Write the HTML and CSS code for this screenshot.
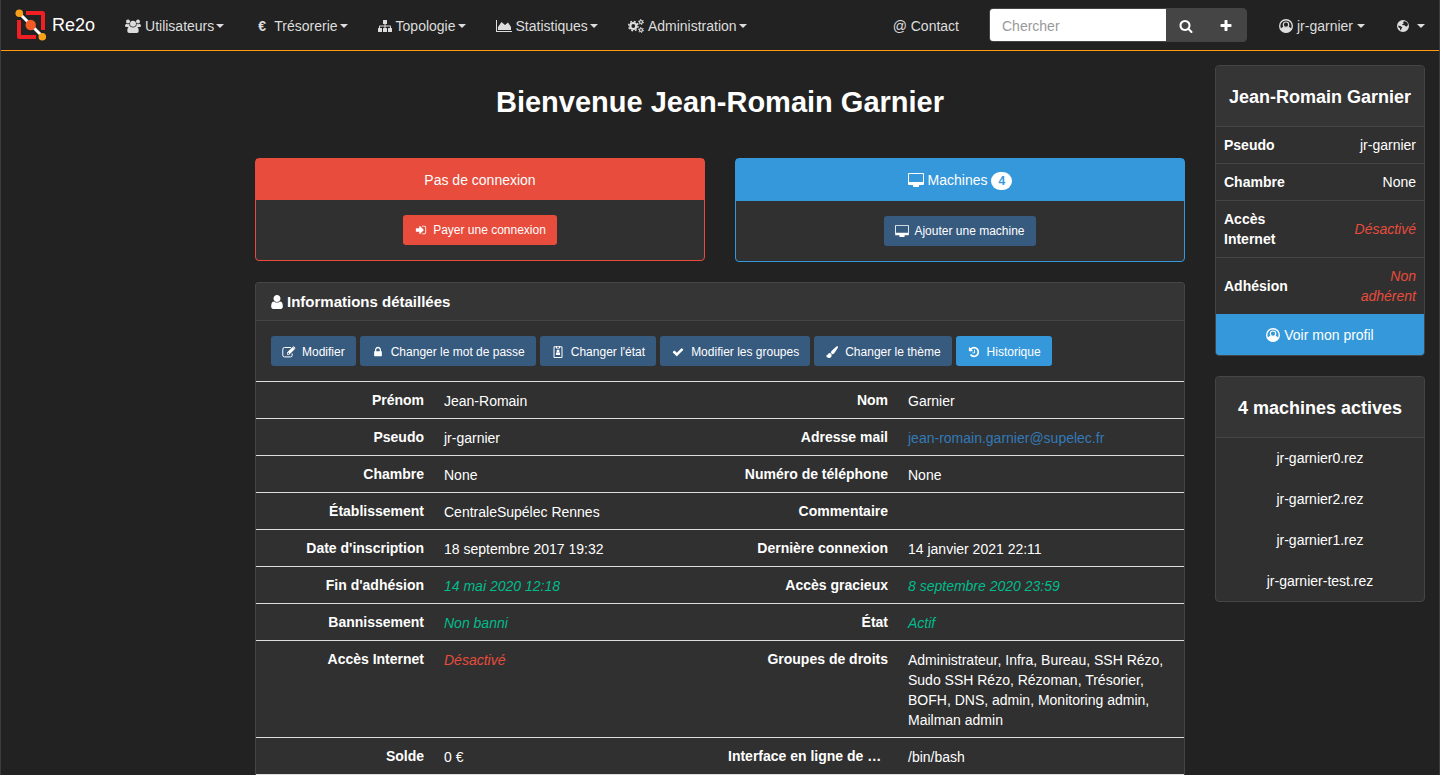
FILE: index.html
```html
<!DOCTYPE html>
<html lang="fr">
<head>
<meta charset="utf-8">
<title>Re2o</title>
<link rel="stylesheet" href="styles.css">
</head>
<body>
<svg class="sprite" aria-hidden="true">
  <symbol id="users" viewBox="0 0 16 14"><circle cx="3" cy="2.6" r="2"/><circle cx="13" cy="2.6" r="2"/><path d="M0 7.6C0 5.5.7 4.7 1.8 4.7c1 .7 1.8.6 2.8.1-.4 1.500.1 2.500.8 3.200H2Q0 8 0 7.600zM16 7.600c0-2.100-.7-2.900-1.800-2.900-1 .7-1.800.6-2.800.1.4 1.500-.1 2.500-.8 3.200H14q2 0 2-.4z"/><circle cx="8" cy="4.800" r="3"/><path d="M2.300 12c0-3 .8-4.600 2.900-4.600 1.800 1.400 3.800 1.400 5.600 0 2.100 0 2.900 1.600 2.900 4.600q0 2-2 2H4.300q-2 0-2-2z"/></symbol>
  <symbol id="sitemap" viewBox="0 0 14 14"><path d="M5.500 1h3q.5 0 .5.5v3q0 .5-.5.5h-1v1.500h4.500q1 0 1 1V9h.5q.5 0 .5.500v3q0 .5-.5.500h-3q-.5 0-.5-.5v-3q0-.5.500-.500H12V7.500H7.500V9h1q.5 0 .5.500v3q0 .5-.5.500h-3q-.5 0-.5-.500v-3q0-.500.500-.500h1V7.500H2V9h1.500q.5 0 .5.500v3q0 .500-.500.500h-3Q0 13 0 12.500v-3Q0 9 .5 9H1V7.500q0-1 1-1h4.500V5h-1Q5 5 5 4.500v-3Q5 1 5.500 1z"/></symbol>
  <symbol id="chart" viewBox="0 0 16 14"><path d="M0 1h1v11h15v1H0zM2 11V8l3.500-5L9 6l3-2.500L15 8v3z"/></symbol>
  <symbol id="cogs" viewBox="0 0 16 14"><g fill="none" stroke="currentColor"><circle cx="5.300" cy="7" r="3" stroke-width="2.200"/><circle cx="5.300" cy="7" r="4.700" stroke-width="1.400" stroke-dasharray="1.900 1.790"/><circle cx="13" cy="3" r="1.500" stroke-width="1.200"/><circle cx="13" cy="3" r="2.500" stroke-width="1" stroke-dasharray="1.300 1.318"/><circle cx="13" cy="11" r="1.500" stroke-width="1.200"/><circle cx="13" cy="11" r="2.500" stroke-width="1" stroke-dasharray="1.300 1.318"/></g></symbol>
  <symbol id="search" viewBox="0 0 1792 1792"><path d="M1216 832q0-185-131.500-316.500t-316.500-131.500-316.500 131.500-131.500 316.500 131.500 316.500 316.500 131.500 316.500-131.500 131.500-316.500zm512 832q0 52-38 90t-90 38q-54 0-90-38l-343-342q-179 124-399 124-143 0-273.500-55.500t-225-150-150-225-55.500-273.500 55.500-273.500 150-225 225-150 273.500-55.500 273.500 55.500 225 150 150 225 55.500 273.500q0 220-124 399l343 343q37 37 37 90z"/></symbol>
  <symbol id="plus" viewBox="0 0 1792 1792"><path d="M1600 736v192q0 40-28 68t-68 28h-416v416q0 40-28 68t-68 28h-192q-40 0-68-28t-28-68v-416h-416q-40 0-68-28t-28-68v-192q0-40 28-68t68-28h416v-416q0-40 28-68t68-28h192q40 0 68 28t28 68v416h416q40 0 68 28t28 68z"/></symbol>
  <symbol id="account" viewBox="0 0 14 14"><circle cx="7" cy="7" r="6.300" fill="none" stroke="currentColor" stroke-width="1.400"/><circle cx="7" cy="5.700" r="2.700" fill="none" stroke="currentColor" stroke-width="1.200"/><path d="M1.500 10.200Q2.600 8.200 4.600 7.800 7 9.800 9.400 7.800q2 .4 3.100 2.400Q10 13.600 7 13.600T1.500 10.200z"/></symbol>
  <symbol id="globe" viewBox="1 0 12 14"><path fill-rule="evenodd" d="M7 1a6 6 0 1 1 0 12A6 6 0 0 1 7 1zM8 2.200 7 3.300l.8.900-1.600 1.300.4.800 1.700-.2 1.100 1.200 1.400.2.800-1 .4-1.500Q11.200 3 9.500 2.500zM2.300 6.500l.2 1.800 1.500 1 .2 1.700.9.300.2-1.600 1.100-1.100-1.600-1.300z"/></symbol>
  <symbol id="user" viewBox="256 128 1280 1536"><path d="M1536 1399q0 109-62.500 187t-150.500 78h-854q-88 0-150.500-78t-62.500-187q0-85 8.500-160.500t31.500-152 58.500-131 94-89 134.500-34.500q131 128 313 128t313-128q76 0 134.500 34.500t94 89 58.500 131 31.500 152 8.500 160.500zm-256-887q0 159-112.500 271.500t-271.500 112.500-271.500-112.500-112.500-271.500 112.500-271.500 271.500-112.500 271.500 112.500 112.500 271.500z"/></symbol>
  <symbol id="signin" viewBox="0 0 1792 1792"><path d="M1312 896q0 26-19 45l-544 544q-19 19-45 19t-45-19-19-45v-288h-448q-26 0-45-19t-19-45v-384q0-26 19-45t45-19h448v-288q0-26 19-45t45-19 45 19l544 544q19 19 19 45zm352-352v704q0 119-84.500 203.500t-203.500 84.500h-320q-32 0-32-32 0-96 32-96h320q66 0 113-47t47-113v-704q0-66-47-113t-113-47h-320q-32 0-32-32 0-96 32-96h320q119 0 203.500 84.500t84.500 203.500z"/></symbol>
  <symbol id="screen" viewBox="0 0 16 14"><path fill-rule="evenodd" d="M1 0h14q1 0 1 1v10q0 1-1 1h-4v1.300q0 .7-.7.700H5.700Q5 14 5 13.300V12H1q-1 0-1-1V1q0-1 1-1zm0 1v8h14V1z"/></symbol>
  <symbol id="edit" viewBox="0 0 14 12"><path d="M9 1.500H2.500q-1.700 0-1.700 1.700v6q0 1.700 1.700 1.700h6q1.700 0 1.700-1.700V7.500" fill="none" stroke="currentColor"/><path fill-rule="evenodd" d="M5 8.700V6.500L10.500 1 12.700 3.200 7.200 8.700zM5.700 7v1h1l.5-.500L6.200 6.500zM11 .5q.5-.5 1 0l1.200 1.200q.5.500 0 1L13 3 10.700.8z"/></symbol>
  <symbol id="lock" viewBox="0 0 1792 1792"><path d="M640 768h512v-192q0-106-75-181t-181-75-181 75-75 181v192zm832 96v576q0 40-28 68t-68 28h-960q-40 0-68-28t-28-68v-576q0-40 28-68t68-28h32v-192q0-184 132-316t316-132 316 132 132 316v192h32q40 0 68 28t28 68z"/></symbol>
  <symbol id="badge" viewBox="0 0 12 12"><path fill="none" stroke="currentColor" d="M2 .8h8v10.700H2z"/><path d="M4 0h1v2h2V0h1v2.500H4zM4 9V7.500Q4 6.300 5 6.200q1 .6 2 0 1 .1 1 1.300V9z"/><circle cx="6" cy="4.900" r="1.500"/></symbol>
  <symbol id="check" viewBox="0 0 1792 1792"><path d="M1671 566q0 40-28 68l-724 724-136 136q-28 28-68 28t-68-28l-136-136-362-362q-28-28-28-68t28-68l136-136q28-28 68-28t68 28l294 295 656-657q28-28 68-28t68 28l136 136q28 28 28 68z"/></symbol>
  <symbol id="brush" viewBox="0 0 12 12"><path d="M11.700.3q.6.600 0 1.800L8.300 7.200Q7.500 8.200 6.300 8.200L4.800 6.700Q4.800 5.600 5.800 4.800L10.300.6q.9-.7 1.400-.3zM4.200 7.100 5.700 8.700Q5.800 12 2.600 12 .4 12 0 9.200q1 .6 1.500-.500.8-1.800 2.700-1.600z"/></symbol>
  <symbol id="history" viewBox="0 0 1792 1792"><path d="M1664 896q0 156-61 298t-164 245-245 164-298 61q-172 0-327-72.500t-264-204.500q-7-10-6.500-22.500t8.500-20.500l137-138q10-9 25-9 16 2 23 12 73 95 179 147t225 52q104 0 198.500-40.500t163.500-109.500 109.500-163.500 40.500-198.500-40.500-198.500-109.500-163.500-163.500-109.500-198.500-40.500q-98 0-188 35.500t-160 101.500l137 138q31 30 14 69-17 40-59 40h-448q-26 0-45-19t-19-45v-448q0-42 40-59 39-17 69 14l130 129q107-101 244.500-156.500t284.500-55.500q156 0 298 61t245 164 164 245 61 298zm-640-288v448q0 14-9 23t-23 9h-320q-14 0-23-9t-9-23v-64q0-14 9-23t23-9h224v-352q0-14 9-23t23-9h64q14 0 23 9t9 23z"/></symbol>
</svg>

<header class="navbar">
  <a class="brand" href="#">
    <svg class="logo" viewBox="15 9 32 32" aria-hidden="true">
      <path d="M26 13h16.500q.5 0 .5.500V30M19 20v16.500q0 .5.500.500H36" fill="none" stroke="#ee2024" stroke-width="4"/>
      <path d="M20 14l22 22" stroke="#222" stroke-width="6"/>
      <path d="M20 14l22 22" stroke="#fff" stroke-width="3"/>
      <circle cx="30.700" cy="25" r="5.200" fill="#f15a24"/>
      <circle cx="19.300" cy="13.300" r="3.800" fill="#f9a01b"/><circle cx="42.300" cy="36.700" r="3.800" fill="#f9a01b"/>
    </svg>
    <span>Re2o</span>
  </a>
  <nav class="menu">
    <a href="#"><svg class="icon wide"><use href="#users"/></svg>Utilisateurs<i class="caret"></i></a>
    <a href="#"><span class="euro">€</span>Trésorerie<i class="caret"></i></a>
    <a href="#"><svg class="icon"><use href="#sitemap"/></svg>Topologie<i class="caret"></i></a>
    <a href="#"><svg class="icon wide"><use href="#chart"/></svg>Statistiques<i class="caret"></i></a>
    <a href="#"><svg class="icon wide"><use href="#cogs"/></svg>Administration<i class="caret"></i></a>
  </nav>
  <div class="menu menu-right">
    <a href="#"><span class="at">@</span>Contact</a>
    <form class="search">
      <input type="text" placeholder="Chercher" aria-label="Chercher">
      <button type="submit" aria-label="Rechercher"><svg class="icon"><use href="#search"/></svg></button>
      <button type="button" aria-label="Recherche avancée"><svg class="icon"><use href="#plus"/></svg></button>
    </form>
    <a href="#"><svg class="icon"><use href="#account"/></svg>jr-garnier<i class="caret spaced"></i></a>
    <a href="#" aria-label="Langue"><svg class="icon narrow"><use href="#globe"/></svg><i class="caret spaced"></i></a>
  </div>
</header>

<div class="layout">
  <main class="content">
    <h2 class="welcome">Bienvenue Jean-Romain Garnier</h2>
    <div class="cards">
      <section class="card card-danger">
        <div class="card-head">Pas de connexion</div>
        <div class="card-body"><a class="btn btn-danger" href="#"><svg><use href="#signin"/></svg>Payer une connexion</a></div>
      </section>
      <section class="card card-info">
        <div class="card-head"><svg class="icon wide"><use href="#screen"/></svg>Machines <span class="count">4</span></div>
        <div class="card-body"><a class="btn" href="#"><svg><use href="#screen"/></svg>Ajouter une machine</a></div>
      </section>
    </div>

    <section class="panel details">
      <h3 class="details-title"><svg class="icon narrow"><use href="#user"/></svg>Informations détaillées</h3>
      <div class="actions">
        <a class="btn" href="#"><svg><use href="#edit"/></svg>Modifier</a>
        <a class="btn" href="#"><svg><use href="#lock"/></svg>Changer le mot de passe</a>
        <a class="btn" href="#"><svg><use href="#badge"/></svg>Changer l'état</a>
        <a class="btn" href="#"><svg><use href="#check"/></svg>Modifier les groupes</a>
        <a class="btn" href="#"><svg><use href="#brush"/></svg>Changer le thème</a>
        <a class="btn btn-info" href="#"><svg><use href="#history"/></svg>Historique</a>
      </div>
      <div class="rows">
        <div class="row"><dl><dt>Prénom</dt><dd>Jean-Romain</dd></dl><dl><dt>Nom</dt><dd>Garnier</dd></dl></div>
        <div class="row"><dl><dt>Pseudo</dt><dd>jr-garnier</dd></dl><dl><dt>Adresse mail</dt><dd><a href="mailto:jean-romain.garnier@supelec.fr">jean-romain.garnier@supelec.fr</a></dd></dl></div>
        <div class="row"><dl><dt>Chambre</dt><dd>None</dd></dl><dl><dt>Numéro de téléphone</dt><dd>None</dd></dl></div>
        <div class="row"><dl><dt>Établissement</dt><dd>CentraleSupélec Rennes</dd></dl><dl><dt>Commentaire</dt><dd></dd></dl></div>
        <div class="row"><dl><dt>Date d'inscription</dt><dd>18 septembre 2017 19:32</dd></dl><dl><dt>Dernière connexion</dt><dd>14 janvier 2021 22:11</dd></dl></div>
        <div class="row"><dl><dt>Fin d'adhésion</dt><dd><em class="ok">14 mai 2020 12:18</em></dd></dl><dl><dt>Accès gracieux</dt><dd><em class="ok">8 septembre 2020 23:59</em></dd></dl></div>
        <div class="row"><dl><dt>Bannissement</dt><dd><em class="ok">Non banni</em></dd></dl><dl><dt>État</dt><dd><em class="ok">Actif</em></dd></dl></div>
        <div class="row"><dl><dt>Accès Internet</dt><dd><em class="off">Désactivé</em></dd></dl><dl><dt>Groupes de droits</dt><dd>Administrateur, Infra, Bureau, SSH Rézo, Sudo SSH Rézo, Rézoman, Trésorier, BOFH, DNS, admin, Monitoring admin, Mailman admin</dd></dl></div>
        <div class="row"><dl><dt>Solde</dt><dd>0 €</dd></dl><dl><dt class="shortened">Interface en ligne de …</dt><dd>/bin/bash</dd></dl></div>
      </div>
    </section>
  </main>

  <aside class="sidebar">
    <section class="panel">
      <h4 class="side-title">Jean-Romain Garnier</h4>
      <table class="summary">
        <tr><th scope="row">Pseudo</th><td>jr-garnier</td></tr>
        <tr><th scope="row">Chambre</th><td>None</td></tr>
        <tr><th scope="row">Accès Internet</th><td><em class="off">Désactivé</em></td></tr>
        <tr><th scope="row">Adhésion</th><td><em class="off">Non adhérent</em></td></tr>
      </table>
      <a class="profile" href="#"><svg class="icon"><use href="#account"/></svg>Voir mon profil</a>
    </section>
    <section class="panel">
      <h4 class="side-title">4 machines actives</h4>
      <ul class="machines">
        <li>jr-garnier0.rez</li>
        <li>jr-garnier2.rez</li>
        <li>jr-garnier1.rez</li>
        <li>jr-garnier-test.rez</li>
      </ul>
    </section>
  </aside>
</div>
</body>
</html>
```
FILE: styles.css
```css
* { box-sizing: border-box; }
body {
  margin: 0;
  background: #222;
  color: #fff;
  font: 14px/20px "Liberation Sans", Arial, sans-serif;
}
body::after {
  content: "";
  position: fixed;
  inset: 0;
  border: solid #3c3c3c;
  border-width: 0 1px;
  pointer-events: none;
}
a { color: #337ab7; text-decoration: none; }
.sprite { display: none; }
svg { fill: currentColor; flex: none; }
.icon { width: 14px; height: 14px; margin-right: 4px; vertical-align: -2px; }
.icon.wide { width: 16px; }
.icon.narrow { width: 12px; }

/* Navigation bar */
.navbar {
  display: flex;
  align-items: center;
  border-bottom: 1px solid #ff9b0c;
}
.brand {
  display: flex;
  align-items: center;
  gap: 5px;
  padding: 0 15px;
  color: #fff;
  font-size: 18px;
}
.logo { width: 32px; height: 32px; }
.menu { display: flex; align-items: center; }
.menu-right { margin-left: auto; }
.menu > a {
  display: flex;
  align-items: center;
  padding: 16px 15px 14px;
  color: #ddd;
}
.caret {
  margin-left: 2px;
  border: solid transparent;
  border-width: 4px 4px 0;
  border-top-color: currentColor;
}
.caret.spaced { margin-left: 6px; }
.menu .icon + .caret.spaced { margin-left: 4px; }
.euro { width: 20px; padding-left: 4px; font-weight: bold; }
.at { width: 18px; }
.search {
  display: flex;
  margin: 0 15px;
  border: 1px solid #464545;
  border-radius: 4px;
  background: #464545;
}
.search input {
  width: 176px;
  height: 32px;
  padding: 2px 12px 0;
  border: 0;
  border-radius: 3px 0 0 3px;
  background: #fff;
  font: inherit;
}
.search input::placeholder { color: #999; }
.search button {
  width: 40px;
  padding: 2px 0 0;
  border: 0;
  background: none;
  color: #fff;
}
.search .icon { margin: 0; }
.search + a { padding-left: 17px; padding-right: 17px; }

/* Page grid */
.layout {
  display: grid;
  grid-template-columns: 2fr 8fr 2fr;
}
.content { grid-column: 2; padding: 0 15px; }
.sidebar { padding: 14px 15px 0; }
.welcome {
  margin: 35px 0 39px;
  font-size: 29px;
  line-height: 33px;
  font-weight: bold;
  text-align: center;
}
.cards {
  display: grid;
  grid-template-columns: 1fr 1fr;
  align-items: start;
  gap: 30px;
  margin-bottom: 20px;
  text-align: center;
}
.card { border: 1px solid; border-radius: 4px; background: #303030; }
.card-danger { border-color: #e74c3c; }
.card-info { border-color: #3498db; }
.card-head { padding: 11px 15px 10px; }
.card-danger .card-head { background: #e74c3c; }
.card-info .card-head { padding-bottom: 11px; background: #3498db; }
.card-body { display: flex; justify-content: center; padding: 15px; }
.count {
  display: inline-block;
  min-width: 21px;
  padding: 3px 7px;
  border-radius: 10px;
  background: #fff;
  color: #3498db;
  font-size: 12px;
  line-height: 12px;
  font-weight: bold;
}
.btn {
  display: inline-flex;
  align-items: center;
  gap: 5px;
  padding: 6px 11px;
  border-radius: 3px;
  background: #375a7f;
  color: #fff;
  font-size: 12px;
  line-height: 18px;
}
.btn svg { width: 14px; height: 12px; }
.btn-danger { background: #e74c3c; }
.btn-info { background: #3498db; }

/* Panels */
.panel {
  margin-bottom: 20px;
  border: 1px solid #464545;
  border-radius: 4px;
  background: #303030;
  overflow: hidden;
}
.details { margin-bottom: 0; border-bottom: 0; border-radius: 4px 4px 0 0; }
.details-title {
  margin: 0;
  padding: 10px 15px 9px;
  border-bottom: 1px solid #464545;
  background: #353535;
  font-size: 15px;
  line-height: 18px;
}
.actions { display: flex; flex-wrap: wrap; gap: 4px; padding: 15px; }
.actions .btn { gap: 6px; padding: 7px 11px 5px; }
.rows { border-bottom: 1px solid #ddd; }
.row {
  display: grid;
  grid-template-columns: 1fr 1fr;
  border-top: 1px solid #ddd;
}
.row dl {
  display: grid;
  grid-template-columns: 160px 1fr;
  gap: 20px;
  margin: 0;
  padding: 9px 8px 7px;
}
.row dt {
  font-weight: bold;
  line-height: 18px;
  text-align: right;
  white-space: nowrap;
}
.row dt.shortened { text-align: left; }
.row dd { min-height: 20px; margin: 0; }
.ok { color: #00bc8c; }
.off { color: #e74c3c; }

/* Sidebar */
.side-title {
  margin: 0;
  padding: 21px 10px 19px;
  border-bottom: 1px solid #464545;
  background: #353535;
  font-size: 18px;
  line-height: 20px;
  text-align: center;
}
.summary { width: 100%; table-layout: fixed; border-collapse: collapse; }
.summary tr + tr { border-top: 1px solid #464545; }
.summary th { width: 54%; padding: 8px; text-align: left; }
.summary td { padding: 8px; text-align: right; }
.profile {
  display: block;
  padding: 11px 15px 10px;
  background: #3498db;
  color: #fff;
  text-align: center;
}
.machines {
  display: grid;
  gap: 1px;
  margin: 0;
  padding: 0;
  list-style: none;
  text-align: center;
}
.machines li { padding: 10px 15px; }
```
